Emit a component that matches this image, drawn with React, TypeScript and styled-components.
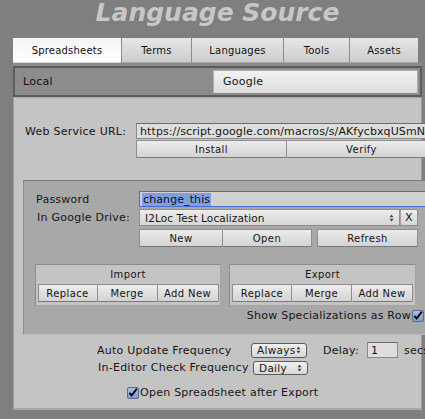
import React from "react";
import styled, { createGlobalStyle } from "styled-components";

const Global = createGlobalStyle`
  html, body { margin: 0; padding: 0; background: #7f7f7f; }
  body { font-family: "DejaVu Sans", Verdana, sans-serif; font-size: 11px; color: #161616; overflow: hidden; }
  * { box-sizing: border-box; }
`;

const Page = styled.div`
  width: 425px;
  height: 419px;
  padding-left: 13px;
  display: flex;
  flex-direction: column;
  overflow: hidden;
`;

const Title = styled.div`
  width: 409px;
  height: 38px;
  text-align: center;
  font-family: "DejaVu Sans", sans-serif;
  font-weight: bold;
  font-style: italic;
  font-size: 25px;
  line-height: 32px;
  margin-top: -3px;
  margin-bottom: 3px;
  color: #c7c7c7;
`;

const Tabs = styled.div`
  display: flex;
  height: 25px;
  width: 405px;
`;

const Tab = styled.div<{ $w: number; $active?: boolean }>`
  width: ${(p) => p.$w}px;
  height: 25px;
  display: flex;
  align-items: center;
  justify-content: center;
  font-size: 10px;
  letter-spacing: 0.2px;
  color: #111;
  background: ${(p) =>
    p.$active
      ? "linear-gradient(#f4f4f4, #ffffff)"
      : "linear-gradient(#e6e6e6, #cdcdcd)"};
  border-left: ${(p) => (p.$active ? "none" : "1px solid #8c8c8c")};
  border-bottom: 1px solid ${(p) => (p.$active ? "#d8d8d8" : "#a8a8a8")};
`;

const Strip = styled.div`
  height: 3px;
  width: 409px;
  background: #8a8a8a;
`;

const Toolbar = styled.div`
  width: 409px;
  height: 31px;
  background: #8c8c8c;
  border: 2px solid #5c5c5c;
  display: flex;
  align-items: center;
  padding: 0 2px 0 8px;
  letter-spacing: 0.25px;
`;

const ToolLabel = styled.div`
  flex: 0 0 190px;
  font-size: 11px;
  color: #141414;
`;

const ToolButton = styled.div`
  flex: 1;
  height: 24px;
  display: flex;
  align-items: center;
  padding-left: 9px;
  background: linear-gradient(#f2f2f2, #dcdcdc);
  border: 1px solid #b0b0b0;
  border-bottom-color: #8a8a8a;
  font-size: 11px;
`;

const Panel = styled.div`
  width: 409px;
  height: 313px;
  background: #c4c4c4;
  border-left: 1px solid #9c9c9c;
  border-right: 1px solid #9c9c9c;
  border-bottom: 2px solid #a8a8a8;
  border-top: 1px solid #a6a6a6;
  display: flex;
  flex-direction: column;
  letter-spacing: 0.25px;
`;

const Row = styled.div<{ $mt?: number; $pl?: number; $h?: number }>`
  display: flex;
  align-items: center;
  margin-top: ${(p) => p.$mt ?? 0}px;
  padding-left: ${(p) => p.$pl ?? 0}px;
  height: ${(p) => (p.$h ? `${p.$h}px` : "auto")};
  white-space: nowrap;
`;

const Label = styled.div<{ $w: number; $ml?: number }>`
  width: ${(p) => p.$w}px;
  margin-left: ${(p) => p.$ml ?? 0}px;
  flex: 0 0 auto;
  font-size: 11px;
  color: #161616;
`;

const TextField = styled.div<{ $w: number }>`
  width: ${(p) => p.$w}px;
  flex: 0 0 auto;
  height: 16px;
  background: #dedede;
  border: 1px solid #8a8a8a;
  border-top-color: #6c6c6c;
  display: flex;
  align-items: center;
  padding-left: 3px;
  font-size: 11px;
  letter-spacing: 0.1px;
  overflow: hidden;
  white-space: nowrap;
`;

const FocusField = styled(TextField)`
  background: #d0d0d0;
  border: 1px solid #4a6ad8;
  padding-left: 2px;
`;

const Selected = styled.span`
  background: #7f9fe2;
  color: #101010;
  padding: 0 1px;
`;

const BtnGroup = styled.div<{ $ml?: number }>`
  display: flex;
  margin-left: ${(p) => p.$ml ?? 0}px;
`;

const Btn = styled.div<{ $w: number; $h?: number; $first?: boolean }>`
  width: ${(p) => p.$w}px;
  height: ${(p) => p.$h ?? 18}px;
  flex: 0 0 auto;
  display: flex;
  align-items: center;
  justify-content: center;
  background: linear-gradient(#ececec, #d3d3d3);
  border: 1px solid #8e8e8e;
  border-left-width: ${(p) => (p.$first ? 1 : 0)}px;
  border-bottom-color: #7a7a7a;
  border-radius: 1px;
  font-size: 10px;
  letter-spacing: 0.4px;
  color: #141414;
`;

const Inner = styled.div`
  margin-left: 9px;
  margin-top: 22px;
  width: 402px;
  height: 155px;
  background: #a8a8a8;
  border-top: 1px solid #7c7c7c;
  border-left: 1px solid #8c8c8c;
  border-bottom: 1px solid #bababa;
  display: flex;
  flex-direction: column;
`;

const Dropdown = styled.div<{ $w: number }>`
  width: ${(p) => p.$w}px;
  flex: 0 0 auto;
  height: 17px;
  background: linear-gradient(#ececec, #d6d6d6);
  border: 1px solid #8e8e8e;
  display: flex;
  align-items: center;
  justify-content: space-between;
  padding: 0 5px 0 5px;
  font-size: 10.5px;
  letter-spacing: 0.1px;
`;

const XBtn = styled.div`
  width: 18px;
  flex: 0 0 auto;
  height: 17px;
  background: linear-gradient(#ececec, #d6d6d6);
  border: 1px solid #8e8e8e;
  border-left: 1px solid #a0a0a0;
  display: flex;
  align-items: center;
  justify-content: center;
  font-size: 11px;
`;

const Groups = styled.div`
  display: flex;
  margin-top: 17px;
  padding-left: 11px;
  gap: 8px;
`;

const Group = styled.div<{ $w: number }>`
  width: ${(p) => p.$w}px;
  height: 42px;
  background: #c4c4c4;
  border: 1px solid #8c8c8c;
  border-right-color: #a4a4a4;
  border-bottom-color: #a4a4a4;
  display: flex;
  flex-direction: column;
  align-items: center;
  padding: 0 2px;
`;

const GroupTitle = styled.div`
  height: 19px;
  display: flex;
  align-items: center;
  font-size: 10px;
  letter-spacing: 0.4px;
`;

const CheckRow = styled.div<{ $mt?: number; $pl?: number; $right?: boolean }>`
  display: flex;
  align-items: center;
  justify-content: ${(p) => (p.$right ? "flex-end" : "flex-start")};
  margin-top: ${(p) => p.$mt ?? 0}px;
  padding-left: ${(p) => p.$pl ?? 0}px;
  padding-right: ${(p) => (p.$right ? 1 : 0)}px;
  font-size: 11px;
  white-space: nowrap;
  gap: 1px;
`;

const Box = styled.div`
  width: 12px;
  height: 12px;
  flex: 0 0 auto;
  background: linear-gradient(#a8c0e8, #7e9ad0);
  border: 1px solid #5a6a90;
  border-radius: 2px;
  display: flex;
  align-items: center;
  justify-content: center;
`;

const Popup = styled.div<{ $w: number; $h: number }>`
  width: ${(p) => p.$w}px;
  flex: 0 0 auto;
  height: ${(p) => p.$h}px;
  background: linear-gradient(#f0f0f0, #d8d8d8);
  border: 1px solid #5c5c5c;
  border-radius: 3px;
  display: flex;
  align-items: center;
  justify-content: space-between;
  padding: 0 5px 0 5px;
  font-size: 10.5px;
  letter-spacing: 0.3px;
`;

const Secs = styled.span`
  margin-left: 6px;
  font-size: 11px;
`;

const Arrows = () => (
  <svg width="5" height="8" viewBox="0 0 5 8">
    <path d="M0.5 3.2 L2.5 0.5 L4.5 3.2 Z M0.5 4.8 L2.5 7.5 L4.5 4.8 Z" fill="#444" />
  </svg>
);

const Check = () => (
  <svg width="11" height="11" viewBox="0 0 11 11">
    <path d="M1.5 5.8 L4 8.8 L9.8 1.2" stroke="#0c0c0c" strokeWidth="2.2" fill="none" />
  </svg>
);

export default function App() {
  return (
    <>
      <Global />
      <Page>
        <Title>Language Source</Title>
        <Tabs>
          <Tab $w={108} $active>Spreadsheets</Tab>
          <Tab $w={70}>Terms</Tab>
          <Tab $w={92}>Languages</Tab>
          <Tab $w={66}>Tools</Tab>
          <Tab $w={69}>Assets</Tab>
        </Tabs>
        <Strip />
        <Toolbar>
          <ToolLabel>Local</ToolLabel>
          <ToolButton>Google</ToolButton>
        </Toolbar>
        <Panel>
          <Row $mt={25} $pl={11} $h={16}>
            <Label $w={111}>Web Service URL:</Label>
            <TextField $w={300}>https://script.google.com/macros/s/AKfycbxqUSmNh</TextField>
          </Row>
          <Row $pl={122} $mt={1}>
            <BtnGroup>
              <Btn $w={151} $first>Install</Btn>
              <Btn $w={150}>Verify</Btn>
            </BtnGroup>
          </Row>
          <Inner>
            <Row $mt={10} $pl={12} $h={16}>
              <Label $w={103}>Password</Label>
              <FocusField $w={290}>
                <Selected>change_this</Selected>
              </FocusField>
            </Row>
            <Row $mt={2} $pl={13} $h={17}>
              <Label $w={102}>In Google Drive:</Label>
              <Dropdown $w={261}>
                <span>I2Loc Test Localization</span>
                <Arrows />
              </Dropdown>
              <XBtn>X</XBtn>
            </Row>
            <Row $mt={3} $pl={115}>
              <BtnGroup>
                <Btn $w={84} $first>New</Btn>
                <Btn $w={89}>Open</Btn>
              </BtnGroup>
              <BtnGroup $ml={5}>
                <Btn $w={101} $first>Refresh</Btn>
              </BtnGroup>
            </Row>
            <Groups>
              <Group $w={186}>
                <GroupTitle>Import</GroupTitle>
                <BtnGroup>
                  <Btn $w={60} $first>Replace</Btn>
                  <Btn $w={60}>Merge</Btn>
                  <Btn $w={61}>Add New</Btn>
                </BtnGroup>
              </Group>
              <Group $w={187}>
                <GroupTitle>Export</GroupTitle>
                <BtnGroup>
                  <Btn $w={60} $first>Replace</Btn>
                  <Btn $w={60}>Merge</Btn>
                  <Btn $w={61}>Add New</Btn>
                </BtnGroup>
              </Group>
            </Groups>
            <CheckRow $mt={3} $right>
              <span>Show Specializations as Row</span>
              <Box>
                <Check />
              </Box>
            </CheckRow>
          </Inner>
          <Row $mt={7} $pl={83} $h={16}>
            <Label $w={154}>Auto Update Frequency</Label>
            <Popup $w={56} $h={15}>
              <span>Always</span>
              <Arrows />
            </Popup>
            <Label $w={44} $ml={16}>Delay:</Label>
            <TextField $w={31}>1</TextField>
            <Secs>secs</Secs>
          </Row>
          <Row $mt={2} $pl={84} $h={15}>
            <Label $w={155}>In-Editor Check Frequency</Label>
            <Popup $w={55} $h={14}>
              <span>Daily</span>
              <Arrows />
            </Popup>
          </Row>
          <CheckRow $mt={11} $pl={113}>
            <Box>
              <Check />
            </Box>
            <span>Open Spreadsheet after Export</span>
          </CheckRow>
        </Panel>
      </Page>
    </>
  );
}
